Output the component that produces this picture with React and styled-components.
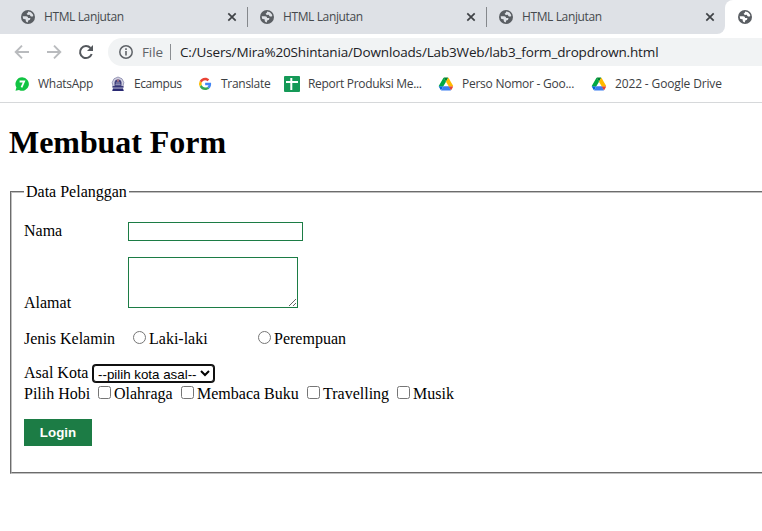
import React from "react";
import styled, { createGlobalStyle } from "styled-components";

const GlobalStyle = createGlobalStyle`
  * { box-sizing: border-box; }
  html, body { margin: 0; background: #fff; overflow: hidden; }
`;

const Window = styled.div`
  width: 762px;
  height: 531px;
  overflow: hidden;
  background: #fff;
  font-family: "Open Sans", "Noto Sans", sans-serif;
`;

/* ---------- browser chrome ---------- */
const TabStrip = styled.div`
  display: flex;
  height: 34px;
  background: #fff;
`;
const Tab = styled.div`
  display: flex;
  align-items: center;
  width: ${(p) => p.$width}px;
  flex: none;
  height: 34px;
  padding-left: ${(p) => p.$pad}px;
  background: #dee1e6;
  border-bottom-right-radius: ${(p) => (p.$last ? 8 : 0)}px;
`;
const TabTitle = styled.span`
  width: 183px;
  margin-left: 9px;
  font-size: 12px;
  line-height: 18px;
  letter-spacing: -0.38px;
  color: #45494d;
  white-space: nowrap;
`;
const TabDivider = styled.span`
  width: 1px;
  height: 20px;
  margin-left: 10px;
  background: #85888c;
`;
const ActiveTab = styled.div`
  flex: 1;
  background: #dee1e6;
`;
const ActiveTabFace = styled.div`
  display: flex;
  align-items: center;
  height: 34px;
  padding-left: 13px;
  background: #fff;
  border-top-left-radius: 8px;
`;
const Toolbar = styled.div`
  display: flex;
  align-items: center;
  height: 36px;
  padding-left: 14px;
`;
const NavIcon = styled.svg`
  flex: none;
  width: 16px;
  height: 16px;
  margin-right: 16px;
`;
const AddressBar = styled.div`
  display: flex;
  align-items: center;
  flex: 1;
  height: 28px;
  margin-left: -2px;
  padding-left: 11px;
  border-radius: 14px 0 0 14px;
  background: #f1f3f4;
  font-size: 14px;
  white-space: nowrap;
`;
const Scheme = styled.span`
  width: 28px;
  margin-left: 9px;
  font-size: 13.5px;
  letter-spacing: -0.1px;
  color: #5f6368;
`;
const SchemeDivider = styled.span`
  width: 1px;
  height: 16px;
  margin-right: 9px;
  background: #8b8e92;
`;
const Url = styled.span`
  font-size: 13.5px;
  letter-spacing: ${(p) => p.$spacing}px;
  color: #202124;
`;
const BookmarksBar = styled.div`
  display: flex;
  align-items: center;
  height: 33px;
  padding: 0 0 5px 14px;
  border-bottom: 1px solid #d6d8da;
`;
const Bookmark = styled.div`
  display: flex;
  align-items: center;
  flex: none;
  width: ${(p) => p.$width}px;
`;
const BookmarkLabel = styled.span`
  margin-left: 8px;
  font-size: 12px;
  line-height: 18px;
  letter-spacing: ${(p) => p.$spacing}px;
  color: #3c4043;
  white-space: nowrap;
`;
const Icon = styled.svg`
  flex: none;
  width: ${(p) => p.$size}px;
  height: ${(p) => p.$size}px;
  display: block;
`;

/* ---------- page ---------- */
const Page = styled.main`
  width: 900px;
  padding: 21px 8px 0;
  font-family: "Liberation Serif", "Times New Roman", serif;
  font-size: 16px;
  line-height: 18px;
  color: #000;
`;
const Heading = styled.h1`
  height: 36px;
  margin: 0 0 23px 1px;
  font-size: 32px;
  line-height: 36px;
  letter-spacing: ${(p) => p.$spacing}px;
  white-space: nowrap;
`;
const FormPanel = styled.fieldset`
  height: 291px;
  margin: 0 2px;
  padding: 0 12px;
  border: 2px groove #c0c0c0;
`;
const Legend = styled.legend`
  height: 18px;
  padding: 0 2px;
`;
const Row = styled.div`
  display: flex;
  align-items: ${(p) => p.$align || "flex-start"};
  height: ${(p) => p.$height}px;
  margin-top: ${(p) => p.$top || 0}px;
  white-space: nowrap;
`;
const Label = styled.label`
  flex: none;
  width: ${(p) => p.$width}px;
`;
const TextInput = styled.input`
  width: 175px;
  height: 19px;
  padding: 1px 2px;
  border: 1px solid #1c7c45;
  outline: none;
`;
const TextArea = styled.textarea`
  width: 170px;
  height: 51px;
  padding: 2px;
  border: 1px solid #1c7c45;
  outline: none;
`;
const Choice = styled.input`
  flex: none;
  width: 13px;
  height: 13px;
  margin: 1px 3px 0 0;
`;
const SelectBox = styled.select`
  width: 121px;
  height: 17px;
  margin: 1px;
  padding: 0;
  border: 1px solid #101010;
  border-radius: 3px;
  box-shadow: 0 0 0 1px #101010;
  outline: none;
  background: #fff;
  color: #000;
  font-family: "Liberation Sans", Arial, sans-serif;
  font-size: 13.333px;
  line-height: 15px;
`;
const LoginButton = styled.button`
  display: block;
  width: 68px;
  height: 27px;
  margin-top: 16px;
  padding: 0;
  border: 0;
  background: #1c7c45;
  color: #fff;
  font: bold 13.333px "Liberation Sans", Arial, sans-serif;
`;

const Globe = ({ land = "#dee1e6" }) => (
  <Icon $size={14} viewBox="0 0 14 14">
    <circle cx="7" cy="7" r="7" fill="#5a5e63" />
    <path d="M7.2 1.6 Q10.2 1.5 11.8 4.2 L12.3 6.1 Q10.8 7.1 9.4 6.1 L8.8 4.8 L6.8 5 L5.6 3.8 L6.8 2.8Z M1.7 6.2 L5.2 6.3 Q7.2 6.5 7.1 8 L9.4 8.1 Q9.7 10.3 7.2 10.6 L6.8 12.4 Q4.2 12.1 4.8 9.6 L2.1 8.8Z" fill={land} />
  </Icon>
);
const Close = () => (
  <Icon $size={10} viewBox="0 0 10 10">
    <path d="M1.3 1.3 L8.7 8.7 M8.7 1.3 L1.3 8.7" stroke="#3f4246" strokeWidth="1.7" />
  </Icon>
);
const WhatsApp = () => (
  <Icon $size={16} viewBox="0 0 16 16">
    <path d="M8.200 1.300 A6.700 6.700 0 1 1 5 13.900 L1.500 14.700 L2.400 11.400 A6.700 6.700 0 0 1 8.200 1.300Z" fill="#12c443" />
    <path d="M5.600 5.500 H10.100 L7.500 11.300" fill="none" stroke="#fff" strokeWidth="1.800" />
  </Icon>
);
const Campus = () => (
  <Icon $size={16} viewBox="0 0 16 16">
    <path d="M8 1 L12 2.800 L13.800 6.500 L12.800 11 H3.200 L2.200 6.500 L4 2.800Z" fill="#d3d3e3" stroke="#8585aa" strokeWidth=".8" />
    <path d="M4.500 6 Q5 3.500 8 3.200 Q11 3.500 11.500 6 V10.500 H4.500Z" fill="#41417d" />
    <path d="M8 2.500 L9 5.500 H7Z" fill="#d98b86" />
    <path d="M6 7 H10 M5.500 8.700 H10.500" stroke="#c5c5dc" strokeWidth=".7" />
    <path d="M2.500 10.200 H13.500 V11.700 H2.500Z" fill="#22226b" />
    <path d="M3 12.300 H13 L13.800 15 H2.200Z" fill="#292973" />
    <path d="M3 12 H13" stroke="#b8b8d0" strokeWidth=".6" />
  </Icon>
);
const Google = () => (
  <Icon $size={16} viewBox="-4 -3 55 55">
    <path fill="#EA4335" d="M24 11.500c3.100 0 5.900 1.100 8.100 3.200l6-6C34.400 5.200 29.600 3 24 3 15.800 3 8.700 7.700 5.300 14.600l7 5.400c1.600-5 6.200-8.500 11.700-8.500z" />
    <path fill="#4285F4" d="M44.500 24.500c0-1.600-.1-2.800-.4-4.100H24v8.100h11.600c-.5 2.700-2 5-4.300 6.500l6.800 5.300c4-3.700 6.400-9.200 6.400-15.800z" />
    <path fill="#FBBC05" d="M12.300 28.200A13 13 0 0 1 12.300 20l-7-5.400a21 21 0 0 0 0 18.900z" />
    <path fill="#34A853" d="M24 45c5.700 0 10.500-1.900 14.100-5.100L31.300 34.600c-1.900 1.300-4.300 2.100-7.300 2.100-5.500 0-10.100-3.500-11.700-8.500l-7 5.400C8.700 40.300 15.800 45 24 45z" />
  </Icon>
);
const Sheets = () => (
  <Icon $size={16} viewBox="0 0 16 16">
    <rect width="16" height="16" rx="1" fill="#159957" />
    <path d="M2 6 H14 M7.300 2 V14" stroke="#fff" strokeWidth="2" />
  </Icon>
);
const Drive = () => (
  <Icon $size={16} viewBox="-5 -5 97.300 88">
    <path d="m6.600 66.850 3.850 6.650c.8 1.400 1.950 2.500 3.300 3.300l13.750-23.800h-27.500c0 1.550.4 3.100 1.200 4.500z" fill="#0066da" />
    <path d="m43.650 25-13.750-23.800c-1.350.8-2.500 1.900-3.300 3.300l-25.400 44a9.060 9.060 0 0 0-1.200 4.500h27.500z" fill="#00a844" />
    <path d="m73.550 76.800c1.350-.8 2.500-1.900 3.300-3.300l7.650-13.250c.8-1.400 1.200-2.950 1.200-4.500v-2.750h-27.500l5.850 11.500z" fill="#e84436" />
    <path d="m43.650 25 13.750-23.800c-1.350-.8-2.900-1.200-4.500-1.200h-18.500c-1.600 0-3.150.45-4.500 1.200z" fill="#00832d" />
    <path d="m59.800 53h-32.300l-13.750 23.800c1.350.8 2.900 1.200 4.500 1.200h50.800c1.600 0 3.150-.45 4.500-1.200z" fill="#3b7df0" />
    <path d="m73.400 26.500-12.700-22c-.8-1.400-1.950-2.500-3.300-3.300l-13.750 23.800 16.150 28h27.450c0-1.550-.4-3.100-1.200-4.500z" fill="#ffba00" />
  </Icon>
);

const tabs = [
  { width: 248, pad: 21 },
  { width: 239, pad: 12 },
  { width: 238, pad: 12, last: true },
];
const bookmarks = [
  { icon: <WhatsApp />, text: "WhatsApp", width: 96, spacing: -0.28 },
  { icon: <Campus />, text: "Ecampus", width: 87, spacing: -0.42 },
  { icon: <Google />, text: "Translate", width: 87, spacing: -0.28 },
  { icon: <Sheets />, text: "Report Produksi Me...", width: 154, spacing: -0.31 },
  { icon: <Drive />, text: "Perso Nomor - Goo...", width: 153, spacing: -0.25 },
  { icon: <Drive />, text: "2022 - Google Drive", width: 150, spacing: -0.14 },
];
const hobbies = [
  { text: "Olahraga", width: 67 },
  { text: "Membaca Buku", width: 110 },
  { text: "Travelling", width: 74 },
  { text: "Musik", width: 60 },
];

export default function App() {
  return (
    <Window>
      <GlobalStyle />
      <TabStrip>
        {tabs.map((t, i) => (
          <Tab key={i} $width={t.width} $pad={t.pad} $last={t.last}>
            <Globe />
            <TabTitle>HTML Lanjutan</TabTitle>
            <Close />
            {!t.last && <TabDivider />}
          </Tab>
        ))}
        <ActiveTab>
          <ActiveTabFace><Globe land="#fff" /></ActiveTabFace>
        </ActiveTab>
      </TabStrip>
      <Toolbar>
        <NavIcon viewBox="0 0 16 16"><path d="M15 8 H2 M8 1.700 L1.700 8 L8 14.300" fill="none" stroke="#b9bbbe" strokeWidth="1.900" /></NavIcon>
        <NavIcon viewBox="0 0 16 16"><path d="M1 8 H14 M8 1.700 L14.300 8 L8 14.300" fill="none" stroke="#b9bbbe" strokeWidth="1.900" /></NavIcon>
        <NavIcon viewBox="0 0 16 16"><path d="M13.700 10 A6 6 0 1 1 12.500 4" fill="none" stroke="#54585d" strokeWidth="2" /><path d="M15 1 V7 H9Z" fill="#54585d" /></NavIcon>
        <AddressBar>
          <Icon $size={14} viewBox="0 0 14 14"><circle cx="7" cy="7" r="6.200" fill="none" stroke="#5f6368" strokeWidth="1.500" /><path d="M7 6 V10.500 M7 3.300 V5" stroke="#5f6368" strokeWidth="1.600" /></Icon>
          <Scheme>File</Scheme>
          <SchemeDivider />
          <Url $spacing={-0.15}>C:/Users/Mira%20Shintania/Downloads/Lab3Web/lab3_form_dropdrown.html</Url>
        </AddressBar>
      </Toolbar>
      <BookmarksBar>
        {bookmarks.map((b) => (
          <Bookmark key={b.text} $width={b.width}>
            {b.icon}
            <BookmarkLabel $spacing={b.spacing}>{b.text}</BookmarkLabel>
          </Bookmark>
        ))}
      </BookmarksBar>
      <Page>
        <Heading $spacing={-0.06}>Membuat Form</Heading>
        <FormPanel>
          <Legend>Data Pelanggan</Legend>
          <Row $top={21} $height={19}>
            <Label $width={104} htmlFor="nama">Nama</Label>
            <TextInput id="nama" />
          </Row>
          <Row $top={16} $height={55} $align="flex-end">
            <Label $width={104} htmlFor="alamat">Alamat</Label>
            <Row $height={55}><TextArea id="alamat" /></Row>
          </Row>
          <Row $top={18} $height={18}>
            <Label $width={109}>Jenis Kelamin</Label>
            <Choice type="radio" name="jk" id="laki" />
            <Label $width={109} htmlFor="laki">Laki-laki</Label>
            <Choice type="radio" name="jk" id="perempuan" />
            <Label $width={90} htmlFor="perempuan">Perempuan</Label>
          </Row>
          <Row $top={16} $height={21}>
            <Label $width={68} htmlFor="kota">Asal Kota</Label>
            <SelectBox id="kota"><option>--pilih kota asal--</option></SelectBox>
          </Row>
          <Row $height={18}>
            <Label $width={74}>Pilih Hobi</Label>
            {hobbies.map((h) => (
              <React.Fragment key={h.text}>
                <Choice type="checkbox" id={h.text} />
                <Label $width={h.width} htmlFor={h.text}>{h.text}</Label>
              </React.Fragment>
            ))}
          </Row>
          <LoginButton type="button">Login</LoginButton>
        </FormPanel>
      </Page>
    </Window>
  );
}
